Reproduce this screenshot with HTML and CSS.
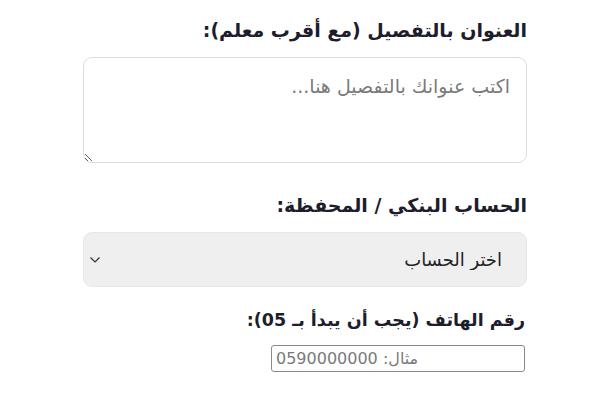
FILE: index.html
```html
<!DOCTYPE html>
<html lang="ar" dir="rtl">
<head>
    <meta charset="UTF-8">
    <meta name="viewport" content="width=device-width, initial-scale=1.0">
    <title>بيانات الطلب</title>
    <link rel="stylesheet" href="styles.css">
</head>
<body>

    <!-- نموذج بيانات التوصيل -->
    <form class="order-form">
        <div class="form-group address-group">
            <label class="form-label" for="address">العنوان بالتفصيل (مع أقرب معلم):</label>
            <textarea id="address" class="form-textarea" placeholder="اكتب عنوانك بالتفصيل هنا..."></textarea>
        </div>

        <div class="form-group account-group">
            <label class="form-label" for="account">الحساب البنكي / المحفظة:</label>
            <div class="select-wrap">
                <select id="account" class="form-select">
                    <option value="">اختر الحساب</option>
                </select>
                <svg class="select-arrow" width="12" height="8" viewBox="0 0 12 8">
                    <path d="M1.5 1.5 L6 6 L10.5 1.5" fill="none" stroke="#333" stroke-width="1.2"/>
                </svg>
            </div>
        </div>

        <div class="form-group phone-group">
            <label class="form-label" for="phone">رقم الهاتف (يجب أن يبدأ بـ 05):</label>
            <input type="text" id="phone" class="form-input" placeholder="مثال: 0590000000">
        </div>
    </form>

</body>
</html>
```

FILE: styles.css
```css
/* الصفحة */
body {
    margin: 0;
    background-color: #ffffff;
    font-family: "DejaVu Sans", "Noto Sans", sans-serif;
    color: #1d1d2b;
}

.order-form {
    width: 444px;
    margin: 0 73px 0 83px;
    padding-top: 19px;
}

.form-group {
    display: flex;
    flex-direction: column;
}

.form-label {
    font-size: 19px;
    line-height: 22px;
    font-weight: bold;
    margin-bottom: 16px;
}

.address-group {
    margin-bottom: 31px;
}

.account-group {
    margin-bottom: 22px;
}

/* مربع العنوان */
.form-textarea {
    height: 106px;
    box-sizing: border-box;
    padding: 16px 16px;
    border: 1px solid #dcdcdc;
    border-radius: 9px;
    font-family: inherit;
    font-size: 19px;
    line-height: 24px;
    resize: vertical;
}

.form-textarea::placeholder {
    color: #7a7a7a;
}

/* قائمة الحسابات */
.select-wrap {
    position: relative;
}

.form-select {
    width: 100%;
    height: 55px;
    padding: 0 24px;
    border: 1px solid #e8e8e8;
    border-radius: 9px;
    background-color: #efefef;
    font-family: inherit;
    font-size: 18px;
    color: #222;
    appearance: none;
}

.select-arrow {
    position: absolute;
    left: 6px;
    top: 24px;
}

/* رقم الهاتف */
.phone-group {
    align-items: flex-start;
    margin-right: 2px;
}

.phone-group .form-label {
    font-size: 17.5px;
    margin-bottom: 14px;
}

.form-input {
    width: 254px;
    height: 27px;
    box-sizing: border-box;
    padding: 2px 4px;
    border: 1px solid #8a8a8a;
    border-radius: 3px;
    font-family: inherit;
    font-size: 16px;
    text-align: left;
}

.form-input::placeholder {
    color: #7a7a7a;
}
```
